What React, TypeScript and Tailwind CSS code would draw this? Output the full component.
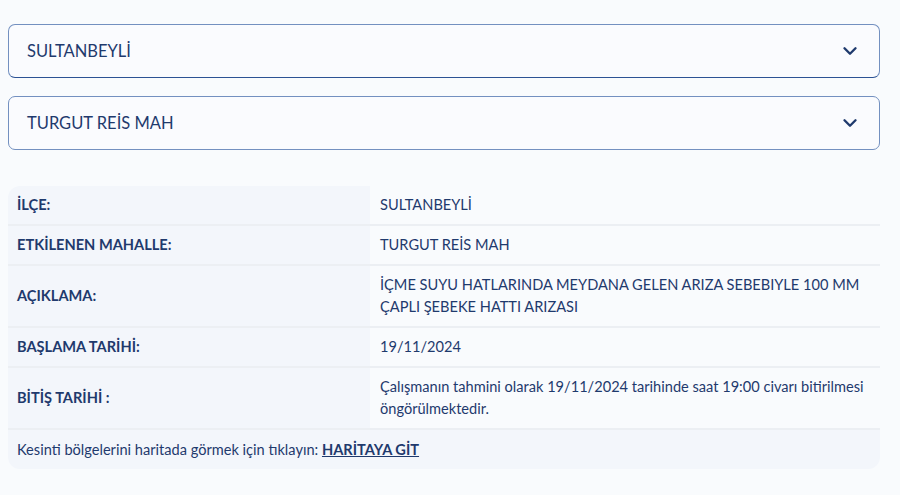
import { ChevronDown } from "lucide-react";

const rows: { label: string; value: string }[] = [
  { label: "İLÇE:", value: "SULTANBEYLİ" },
  { label: "ETKİLENEN MAHALLE:", value: "TURGUT REİS MAH" },
  {
    label: "AÇIKLAMA:",
    value: "İÇME SUYU HATLARINDA MEYDANA GELEN ARIZA SEBEBIYLE 100 MM ÇAPLI ŞEBEKE HATTI ARIZASI",
  },
  { label: "BAŞLAMA TARİHİ:", value: "19/11/2024" },
  {
    label: "BİTİŞ TARİHİ :",
    value: "Çalışmanın tahmini olarak 19/11/2024 tarihinde saat 19:00 civarı bitirilmesi öngörülmektedir.",
  },
];

function SelectBox({ value, focused }: { value: string; focused?: boolean }) {
  return (
    <div
      className={`flex h-[54px] items-center justify-between rounded-[7px] border border-[#7390c0] bg-[#fafbfe] pl-[18px] pr-[18px] ${
        focused ? "border-b-[#2c5294]" : ""
      }`}
    >
      <span className="text-[16.5px] text-[#1f3a6d]">{value}</span>
      <ChevronDown className="h-[22px] w-[22px] text-[#1f3a6d]" strokeWidth={2.6} />
    </div>
  );
}

export default function App() {
  return (
    <div
      className="min-h-[495px] bg-[#f9fbfd] px-2 pt-6 text-[#1f3a6d]"
      style={{ fontFamily: "Lato, 'Noto Sans', sans-serif" }}
    >
      <div className="mr-[12px] flex flex-col gap-[18px]">
        <SelectBox value="SULTANBEYLİ" focused />
        <SelectBox value="TURGUT REİS MAH" />
      </div>

      <div className="mr-[12px] mt-[36px] overflow-hidden rounded-[12px] text-[14.6px] leading-[22px]">
        {rows.map((r) => (
          <div key={r.label} className="flex border-b-2 border-[#eceff3]">
            <div className="flex w-[362px] shrink-0 items-center bg-[#f3f6fb] px-[9px] py-[8px] font-bold">
              {r.label}
            </div>
            <div className="flex flex-1 items-center bg-[#f9fbfd] py-[8px] pl-[10px] pr-1">
              {r.value}
            </div>
          </div>
        ))}
        <div className="flex h-[39px] items-center bg-[#f3f6fb] px-[9px]">
          <span>Kesinti bölgelerini haritada görmek için tıklayın:&nbsp;</span>
          <a className="font-bold underline" href="#">
            HARİTAYA GİT
          </a>
        </div>
      </div>
    </div>
  );
}
